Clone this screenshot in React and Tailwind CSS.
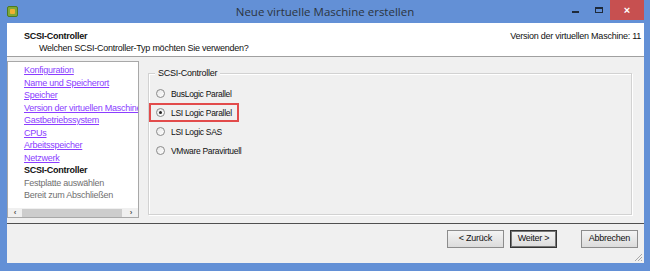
const navItems = [
  { label: "Konfiguration", state: "done" },
  { label: "Name und Speicherort", state: "done" },
  { label: "Speicher", state: "done" },
  { label: "Version der virtuellen Maschine", state: "done" },
  { label: "Gastbetriebssystem", state: "done" },
  { label: "CPUs", state: "done" },
  { label: "Arbeitsspeicher", state: "done" },
  { label: "Netzwerk", state: "done" },
  { label: "SCSI-Controller", state: "current" },
  { label: "Festplatte auswählen", state: "todo" },
  { label: "Bereit zum Abschließen", state: "todo" },
];

const options = [
  { label: "BusLogic Parallel", checked: false },
  { label: "LSI Logic Parallel", checked: true, highlight: true },
  { label: "LSI Logic SAS", checked: false },
  { label: "VMware Paravirtuell", checked: false },
];

const Radio = ({ checked }) => (
  <span className="w-[9px] h-[9px] rounded-full border border-[#8a8a8a] bg-gradient-to-br from-[#e6e6e6] to-white flex items-center justify-center shrink-0">
    {checked && <span className="w-[3px] h-[3px] rounded-full bg-[#222]" />}
  </span>
);

const Button = ({ children, primary, className = "" }) => (
  <button
    className={`h-[18px] text-[9px] tracking-[-0.25px] text-[#111] bg-gradient-to-b from-[#f4f4f4] to-[#dcdcdc] border ${
      primary ? "border-[#333] outline outline-1 outline-[#777] -outline-offset-2" : "border-[#8c8c8c]"
    } ${className}`}
  >
    {children}
  </button>
);

export default function App() {
  return (
    <div className="w-[650px] h-[271px] bg-[#6390d6] flex flex-col font-['Liberation_Sans',Arial,sans-serif] overflow-hidden">
      {/* title bar */}
      <div className="h-[23px] flex items-center relative shrink-0">
        <div className="ml-[7px] w-[11px] h-[11px] rounded-[2px] bg-[#7fa839] border border-[#4d7a1f] flex items-center justify-center">
          <span className="w-[5px] h-[5px] bg-[#f0b030] rounded-[1px]" />
        </div>
        <div className="absolute left-0 right-0 top-[3px] text-center text-[11.5px] text-[#2b3440] font-['Open_Sans',sans-serif]">
          Neue virtuelle Maschine erstellen
        </div>
        <div className="ml-auto flex items-start h-full">
          <div className="w-[23px] h-[20px] flex items-center justify-center">
            <span className="w-[7px] h-[2px] bg-[#1e2a3a] mt-[4px]" />
          </div>
          <div className="w-[23px] h-[20px] flex items-center justify-center">
            <span className="w-[8px] h-[6px] border border-t-2 border-[#1e2a3a]" />
          </div>
          <div className="w-[34px] h-[20px] bg-[#c75050] flex items-center justify-center mr-[6px] text-white text-[11px] font-bold">
            ×
          </div>
        </div>
      </div>

      {/* client */}
      <div className="flex-1 mx-[6px] ml-[7px] bg-[#f0f0f0] flex flex-col tracking-[-0.25px]">
        <div className="h-[34px] bg-white border-b border-[#a0a0a0] flex justify-between shrink-0 px-[17px] pr-[3px] pt-[8px] text-[9px] text-[#111]">
          <div>
            <div className="font-bold leading-[11px]">SCSI-Controller</div>
            <div className="pl-[15px] leading-[12px]">Welchen SCSI-Controller-Typ möchten Sie verwenden?</div>
          </div>
          <div className="leading-[11px]">Version der virtuellen Maschine: 11</div>
        </div>

        <div className="flex pt-[4px] h-[166px] shrink-0">
          <div className="w-[132px] h-[157px] border border-[#a8a8a8] bg-white flex flex-col shrink-0">
            <div className="flex-1 overflow-hidden pl-[16px] pt-[2px] text-[9px] leading-[12.5px] whitespace-nowrap">
              {navItems.map((item) => (
                <div
                  key={item.label}
                  className={
                    item.state === "done"
                      ? "text-[#8b3dff] underline"
                      : item.state === "current"
                      ? "font-bold text-[#111]"
                      : "text-[#707070]"
                  }
                >
                  {item.label}
                </div>
              ))}
            </div>
            <div className="h-[9px] flex items-center bg-[#f0f0f0] text-[8px] text-[#555] font-bold">
              <span className="w-[14px] text-center">‹</span>
              <span className="w-[100px] h-[8px] bg-[#cdcdcd]" />
              <span className="ml-auto w-[14px] text-center">›</span>
            </div>
          </div>

          <div className="flex-1 pl-[9px] pr-[12px] pt-[12px]">
            <div className="relative h-[142px] border border-[#d2d2d2] shadow-[inset_1px_1px_0_#fff,1px_1px_0_#fff]">
              <span className="absolute left-[6px] -top-[6px] px-[3px] bg-[#f0f0f0] text-[9px] leading-[11px] text-[#111]">
                SCSI-Controller
              </span>
              <div className="pt-[10px] flex flex-col items-start text-[8.5px] tracking-[-0.3px] text-[#111]">
                {options.map((o) => (
                  <div
                    key={o.label}
                    className={`flex items-center gap-[6px] h-[19px] min-w-[81px] pl-[5px] pr-[5px] border-2 ${
                      o.highlight ? "border-[#e24b4b]" : "border-transparent"
                    }`}
                  >
                    <Radio checked={o.checked} />
                    <span className="leading-[12px] whitespace-nowrap">{o.label}</span>
                  </div>
                ))}
              </div>
            </div>
          </div>
        </div>

        <div className="h-px bg-[#505050]" />

        <div className="flex justify-end items-start pt-[6px] pr-[6px] flex-1 relative">
          <Button className="w-[57px]">&lt; Zurück</Button>
          <Button primary className="w-[47px] ml-[6px]">Weiter &gt;</Button>
          <Button className="w-[57px] ml-[24px]">Abbrechen</Button>
          <svg className="absolute right-[1px] bottom-[1px]" width="10" height="10" viewBox="0 0 10 10">
            <path d="M9 2 L2 9 M9 5 L5 9 M9 8 L8 9" stroke="#a8a8a8" strokeWidth="1" />
          </svg>
        </div>
      </div>
      <div className="h-[8px] shrink-0" />
    </div>
  );
}
